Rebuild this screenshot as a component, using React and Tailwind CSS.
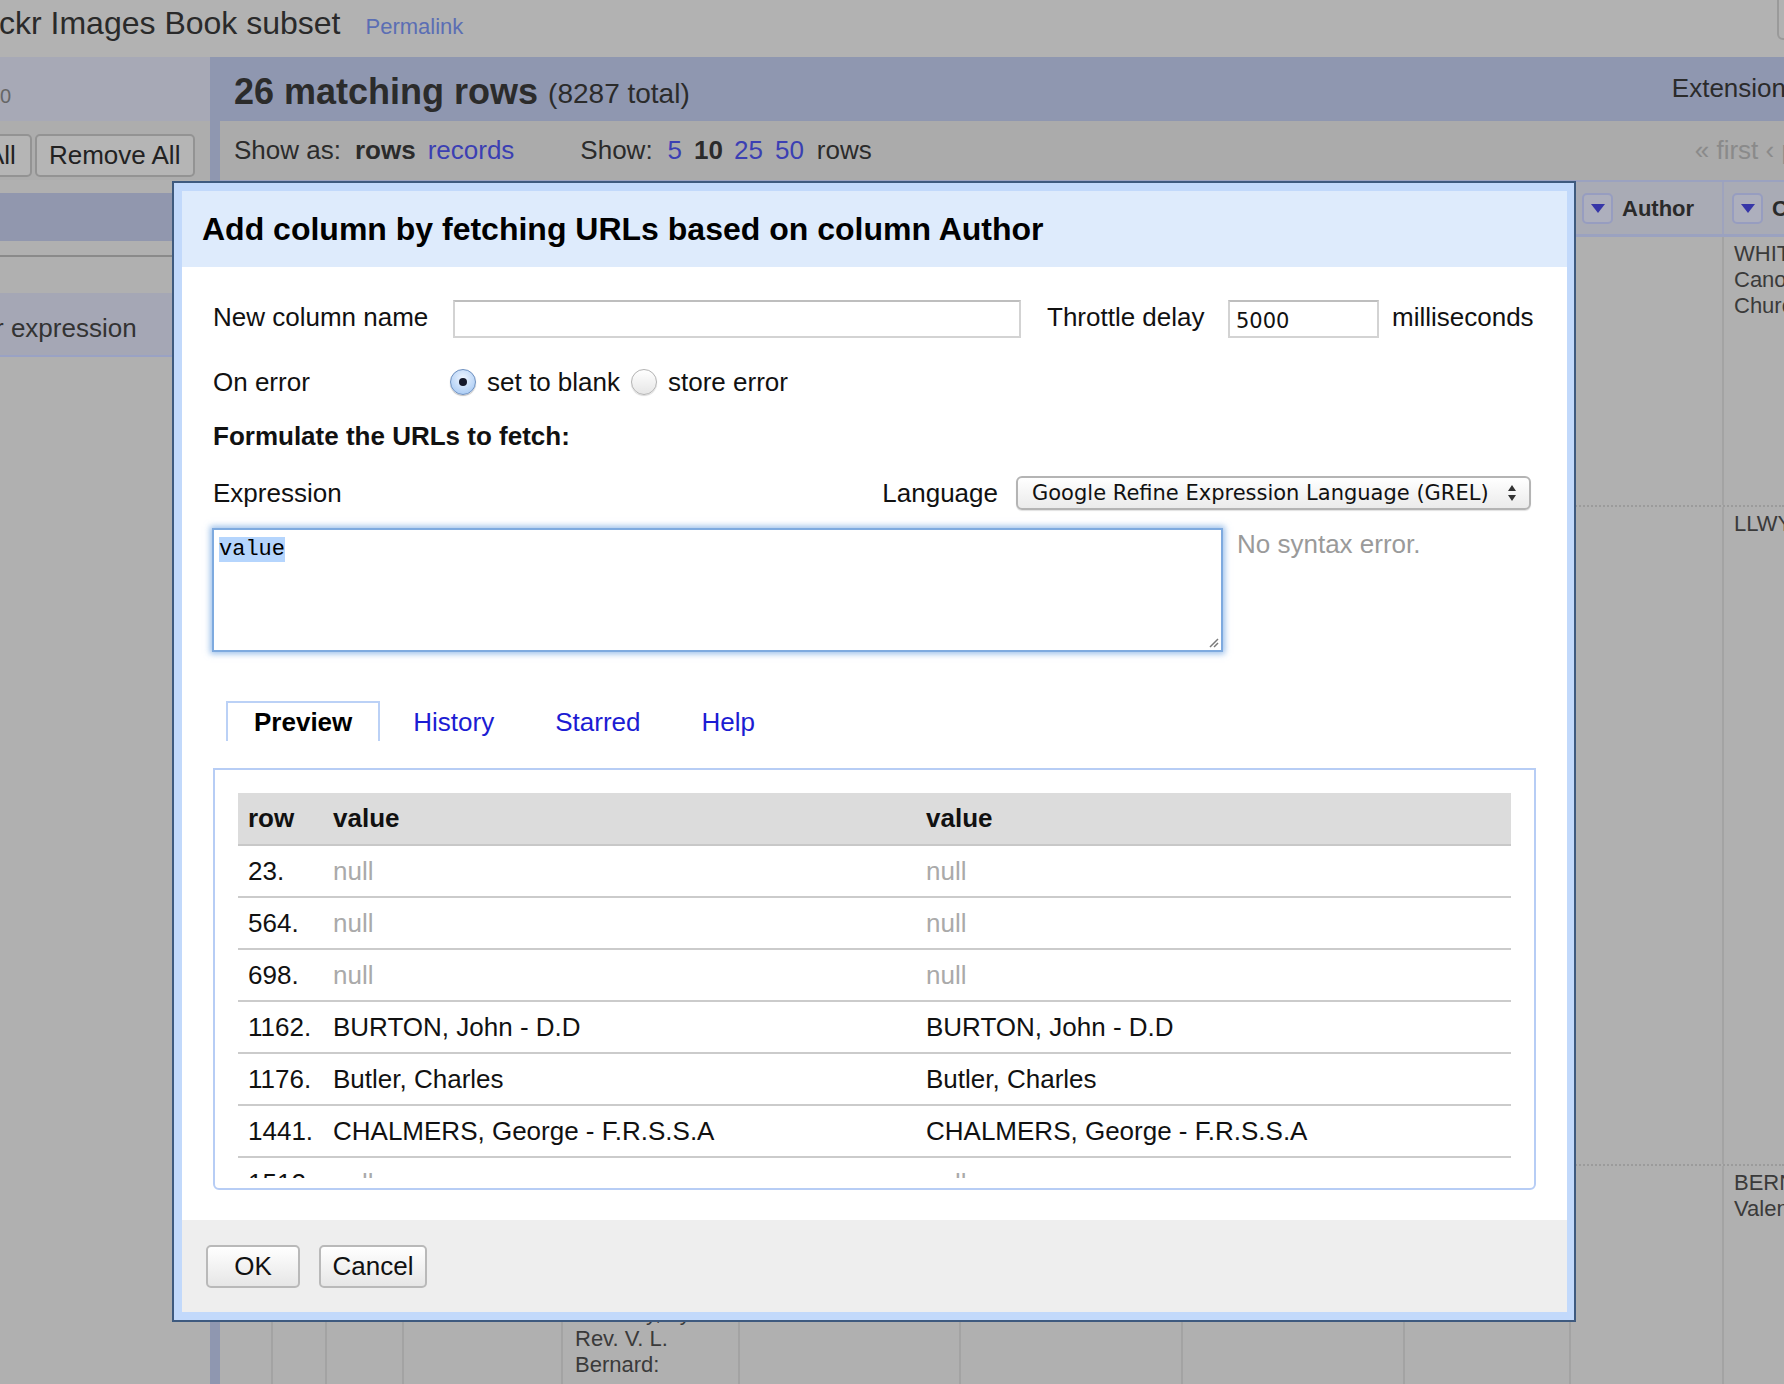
import React from 'react';

const colW = ['w-[53px]', 'w-[54px]', 'w-[77px]', 'w-[159px]', 'w-[177px]', 'w-[221px]', 'w-[222px]', 'w-[222px]', 'w-[166px]', 'w-[153px]', 'w-[220px]'];

const preview = [
  ['23.', null],
  ['564.', null],
  ['698.', null],
  ['1162.', 'BURTON, John - D.D'],
  ['1176.', 'Butler, Charles'],
  ['1441.', 'CHALMERS, George - F.R.S.S.A'],
  ['1512.', null],
  ['1530.', null],
];

const DropBtn = () => (
  <span className="flex h-[31px] w-[31px] shrink-0 items-center justify-center rounded-[5px] border-2 border-[#979dc0] bg-[#adafbd]">
    <svg width="14" height="9" viewBox="0 0 14 9">
      <path d="M0 0h14L7 9z" fill="#3636a8" />
    </svg>
  </span>
);

const Radio = ({ checked, className = '' }) =>
  checked ? (
    <span className={`flex h-[26px] w-[26px] shrink-0 items-center justify-center rounded-full border border-[#6d8fbf] bg-[radial-gradient(circle_at_50%_35%,#eef5ff,#9cc3f2)] shadow-[0_1px_1px_rgba(0,0,0,0.25)] ${className}`}>
      <span className="h-[8px] w-[8px] rounded-full bg-[#15192a]" />
    </span>
  ) : (
    <span className={`block h-[26px] w-[26px] shrink-0 rounded-full border border-[#b3b3b3] bg-[linear-gradient(#ffffff,#e6e6e6)] shadow-[0_1px_1px_rgba(0,0,0,0.15)] ${className}`} />
  );

const Cell = ({ w, className = '', children }) => (
  <div className={`${w} h-full shrink-0 overflow-hidden border-r-2 border-[#a3a3a3] pl-[10px] pt-[4px] text-[22px] leading-[26px] text-[#3a3a3a] whitespace-nowrap ${className}`}>
    {children}
  </div>
);

const DataRow = ({ h, cells, last }) => (
  <div className={`flex shrink-0 ${h} ${last ? '' : 'border-b-2 border-dotted border-[#9b9b9b]'}`}>
    {colW.map((w, i) => (
      <Cell key={i} w={w} className={i === 4 ? 'pl-[12px]' : ''}>
        {cells[i]}
      </Cell>
    ))}
  </div>
);

const Dialog = () => (
  <div className="absolute left-[172px] top-[181px] h-[1141px] w-[1404px] border-2 border-[#3e5a7f] bg-[#c2d9fb] p-[8px] pr-[7px] text-[#111]">
    <div className="flex h-full flex-col bg-white">
      <div className="flex h-[76px] shrink-0 items-center bg-[#deebfc] pl-[20px] text-[32px] font-bold text-black">
        Add column by fetching URLs based on column Author
      </div>

      <div className="flex flex-1 flex-col px-[31px] pt-[33px] text-[26px]">
        {/* nom de colonne + délai */}
        <div className="flex h-[38px] items-center">
          <span className="mt-[-3px] w-[240px] shrink-0">New column name</span>
          <div className="h-[38px] w-[568px] shrink-0 border-2 border-[#d3d3d3] border-t-[#bebebe] bg-white" />
          <span className="ml-[26px] mt-[-3px] w-[181px] shrink-0">Throttle delay</span>
          <div className="flex h-[38px] w-[151px] shrink-0 items-center border-2 border-[#d3d3d3] border-t-[#bebebe] bg-white pl-[6px] pt-[6px] font-['DejaVu_Sans',sans-serif] text-[21px]">
            5000
          </div>
          <span className="ml-[13px] mt-[-3px]">milliseconds</span>
        </div>

        <div className="mt-[25px] flex h-[38px] items-center">
          <span className="w-[237px] shrink-0">On error</span>
          <Radio checked />
          <span className="ml-[11px]">set to blank</span>
          <Radio className="ml-[11px]" />
          <span className="ml-[11px]">store error</span>
        </div>

        <div className="mt-[20px] h-[30px] leading-[30px] font-bold">Formulate the URLs to fetch:</div>

        <div className="mt-[25px] flex h-[34px] items-center">
          <span>Expression</span>
          <span className="ml-auto">Language</span>
          <div className="ml-[18px] mr-[5px] flex h-[34px] w-[515px] items-center justify-between rounded-[6px] border-2 border-[#b4b4b4] bg-[linear-gradient(#ffffff,#ebebeb)] pl-[14px] pr-[12px] font-['DejaVu_Sans',sans-serif] text-[21px] shadow-[0_1px_1px_rgba(0,0,0,0.12)]">
            <span className="mt-[1px]">Google Refine Expression Language (GREL)</span>
            <svg width="10" height="18" viewBox="0 0 10 18">
              <path d="M1 7L5 1l4 6z M1 11l4 6 4-6z" fill="#333" />
            </svg>
          </div>
        </div>

        <div className="mt-[18px] flex items-start">
          <div className="relative ml-[-1px] h-[124px] w-[1011px] shrink-0 border-2 border-[#7eaadf] pl-[5px] pt-[4px] leading-[24px] shadow-[0_0_6px_2px_rgba(90,150,220,0.6)]">
            <span className="bg-[#b5d5fd] font-['Liberation_Mono',monospace] text-[22px] leading-[24px] text-black">value</span>
            <svg className="absolute bottom-[2px] right-[2px]" width="12" height="12" viewBox="0 0 12 12">
              <path d="M11 3L3 11 M11 7L7 11" stroke="#7a7a7a" strokeWidth="1.5" />
            </svg>
          </div>
          <span className="ml-[14px] mt-[-3px] text-[#9a9a9a]">No syntax error.</span>
        </div>

        {/* onglets */}
        <div className="mt-[49px] flex h-[40px] gap-[5px] pl-[13px]">
          <div className="flex items-center border-2 border-b-0 border-[#bbd1f6] px-[26px] font-bold text-black">Preview</div>
          {['History', 'Starred', 'Help'].map((t) => (
            <div key={t} className="flex items-center border-2 border-b-0 border-transparent px-[26px] text-[#1c1cd3]">
              {t}
            </div>
          ))}
        </div>

        <div className="mt-[27px] h-[422px] rounded-b-[6px] border-2 border-[#b7cdf5] px-[23px] pb-[10px] pt-[23px]">
          <div className="h-[385px] overflow-hidden">
            <table className="w-full table-fixed border-collapse text-left">
              <colgroup>
                <col className="w-[85px]" />
                <col className="w-[593px]" />
                <col />
              </colgroup>
              <thead>
                <tr className="h-[52px] border-b-2 border-[#c8c8c8] bg-[#dcdcdc]">
                  <th className="pl-[10px] font-bold">row</th>
                  <th className="pl-[10px] font-bold">value</th>
                  <th className="pl-[10px] font-bold">value</th>
                </tr>
              </thead>
              <tbody>
                {preview.map(([n, v]) => (
                  <tr key={n} className="h-[52px] border-b-2 border-[#cbcbcb]">
                    <td className="pl-[10px]">{n}</td>
                    <td className={`pl-[10px] ${v ? '' : 'text-[#aaaaaa]'}`}>{v || 'null'}</td>
                    <td className={`pl-[10px] ${v ? '' : 'text-[#aaaaaa]'}`}>{v || 'null'}</td>
                  </tr>
                ))}
              </tbody>
            </table>
          </div>
        </div>
      </div>

      <div className="flex h-[92px] shrink-0 items-center gap-[19px] bg-[#eeeeee] pl-[24px] text-[26px]">
        <button className="h-[43px] w-[94px] rounded-[5px] border-2 border-[#b9b9b9] bg-[linear-gradient(#ffffff,#e6e6e6)] text-[#111]">OK</button>
        <button className="h-[43px] w-[108px] rounded-[5px] border-2 border-[#b9b9b9] bg-[linear-gradient(#ffffff,#e6e6e6)] text-[#111]">Cancel</button>
      </div>
    </div>
  </div>
);

export default function App() {
  const row1 = [];
  row1[10] = (<><div>WHITE, Henry -</div><div>Canon of</div><div>Church</div></>);
  const row2 = [];
  row2[10] = <div>LLWYD, Morgan</div>;
  const row3 = [];
  row3[4] = (
    <>
      <div>Lectures on</div>
      <div>the History of</div>
      <div>the Church,</div>
      <div>delivered in</div>
      <div>the chapel of</div>
      <div>St. Mary, by the</div>
      <div>Rev. V. L.</div>
      <div>Bernard:</div>
    </>
  );
  row3[10] = (<><div>BERNARD,</div><div>Valentine</div></>);

  return (
    <div className="relative h-[1384px] w-[1784px] overflow-hidden bg-[#b0b0b0] font-['Liberation_Sans',Arial,sans-serif]">
      {/* barre du haut */}
      <div className="flex h-[57px] items-start bg-[#b2b2b2]">
        <div className="flex items-baseline">
          <span className="ml-[-1px] text-[32px] leading-[46px] text-[#2a2a2a]">ckr Images Book subset</span>
          <span className="ml-[25px] text-[22px] text-[#5b6eb4]">Permalink</span>
        </div>
        <div className="ml-auto mr-[-33px] mt-[-8px] h-[48px] w-[40px] shrink-0 rounded-[6px] border-2 border-[#9a9a9a]" />
      </div>

      <div className="flex h-[1327px]">
        {/* panneau gauche */}
        <div className="flex w-[210px] shrink-0 flex-col">
          <div className="flex h-[64px] items-center bg-[#a7a9b6] pt-[14px] text-[20px] text-[#666]">0</div>
          <div className="flex h-[59px] items-start gap-[3px] bg-[#adadad] pt-[13px] text-[26px] text-[#222]">
            <span className="ml-[-29px] flex h-[43px] items-center rounded-[5px] border-2 border-[#939393] bg-[#b5b5b5] px-[14px]">All</span>
            <span className="flex h-[43px] w-[160px] items-center rounded-[5px] border-2 border-[#939393] bg-[#b5b5b5] pl-[12px]">Remove All</span>
          </div>
          <div className="mt-[13px] h-[48px] bg-[#9197ae]" />
          <div className="mt-[14px] h-[2px] bg-[#8a8a8a]" />
          <div className="mt-[36px] flex h-[64px] items-center border-b-2 border-[#9aa2c4] bg-[#a5a7b5] pt-[8px] text-[26px] text-[#333]">
            <span className="ml-[-5px] whitespace-nowrap">r expression</span>
          </div>
        </div>

        {/* vue principale */}
        <div className="flex min-w-0 flex-1 flex-col">
          <div className="flex h-[64px] shrink-0 items-center bg-[#8f97b0] pl-[24px] pt-[6px] text-[#2b2b2b]">
            <span className="text-[36px] font-bold">26 matching rows</span>
            <span className="ml-[10px] mt-[4px] text-[28px]">(8287 total)</span>
            <span className="ml-auto mr-[-15px] mt-[-8px] shrink-0 whitespace-nowrap text-[26px]">Extensions</span>
          </div>

          <div className="flex flex-1 flex-col border-l-[10px] border-[#8f97b0]">
            <div className="flex h-[59px] shrink-0 items-center whitespace-nowrap bg-[#ababab] pl-[14px] text-[26px] text-[#2b2b2b]">
              <span>Show as:</span>
              <span className="ml-[14px] font-bold">rows</span>
              <span className="ml-[12px] text-[#3b3fb3]">records</span>
              <span className="ml-[66px]">Show:</span>
              <span className="ml-[15px] text-[#3b3fb3]">5</span>
              <span className="ml-[12px] font-bold">10</span>
              <span className="ml-[11px] text-[#3b3fb3]">25</span>
              <span className="ml-[12px] text-[#3b3fb3]">50</span>
              <span className="ml-[13px]">rows</span>
              <span className="ml-[823px] shrink-0 text-[#8a8a8a]">« first ‹ previous</span>
            </div>

            {/* en-têtes de colonnes */}
            <div className="flex h-[57px] shrink-0 border-b-[3px] border-t-2 border-[#9ba2c0] bg-[#a9abb5]">
              {colW.map((w, i) => (
                <div key={i} className={`${w} flex h-full shrink-0 items-center overflow-hidden whitespace-nowrap border-r-2 border-[#9ea3bd] text-[22px] font-bold text-[#2a2a2a] ${i === 9 ? 'pl-[11px]' : 'pl-[8px]'}`}>
                  {i >= 9 && (
                    <>
                      <DropBtn />
                      <span className="ml-[9px]">{i === 9 ? 'Author' : 'Contributor'}</span>
                    </>
                  )}
                </div>
              ))}
            </div>

            <DataRow h="h-[270px]" cells={row1} />
            <DataRow h="h-[659px]" cells={row2} />
            <DataRow h="flex-1" cells={row3} last />
          </div>
        </div>
      </div>

      <Dialog />
    </div>
  );
}
